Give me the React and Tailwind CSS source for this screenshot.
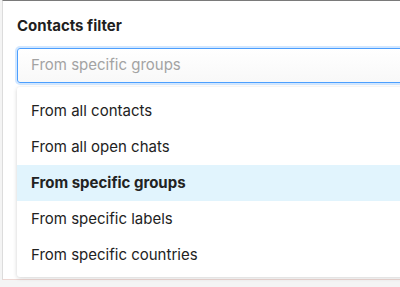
import React from 'react';

const options = [
  'From all contacts',
  'From all open chats',
  'From specific groups',
  'From specific labels',
  'From specific countries',
];

const App = () => {
  const selected = 'From specific groups';

  return (
    <div className="h-[287px] w-[400px] overflow-hidden bg-[#f4f4f4] font-['Inter','Liberation_Sans',sans-serif]">
      <div className="relative ml-[2px] h-[280px] w-[420px] border-l border-t border-b border-l-[#dcdcdc] border-t-[#7a7a7a] border-b-[#ecd6d2] bg-white pl-[14px] pt-[15px]">
        <h2 className="text-[15px] font-bold leading-[20px] text-[#1f1f1f]">Contacts filter</h2>

        <div className="relative mt-[12px]">
          {/* Input */}
          <div className="flex h-[35px] items-center rounded-[3px] border border-[#4c9ffe] bg-gradient-to-b from-white to-[#f8f8f8] px-[13px] shadow-[0_0_0_2px_rgba(76,159,254,0.25)]">
            <span className="text-[15px] text-[#a3a3a3]">From specific groups</span>
          </div>

          {/* Dropdown */}
          <div className="mt-[4px] rounded-[3px] bg-white pt-[6px] pb-[4px] shadow-[0_1px_4px_rgba(0,0,0,0.18)]">
            {options.map((opt) => (
              <div
                key={opt}
                className={`flex h-[36px] items-center px-[14px] text-[15px] text-[#222] ${
                  opt === selected ? 'bg-[#e1f4fd] font-bold' : ''
                }`}
              >
                {opt}
              </div>
            ))}
          </div>
        </div>
      </div>
    </div>
  );
};

export default App;
